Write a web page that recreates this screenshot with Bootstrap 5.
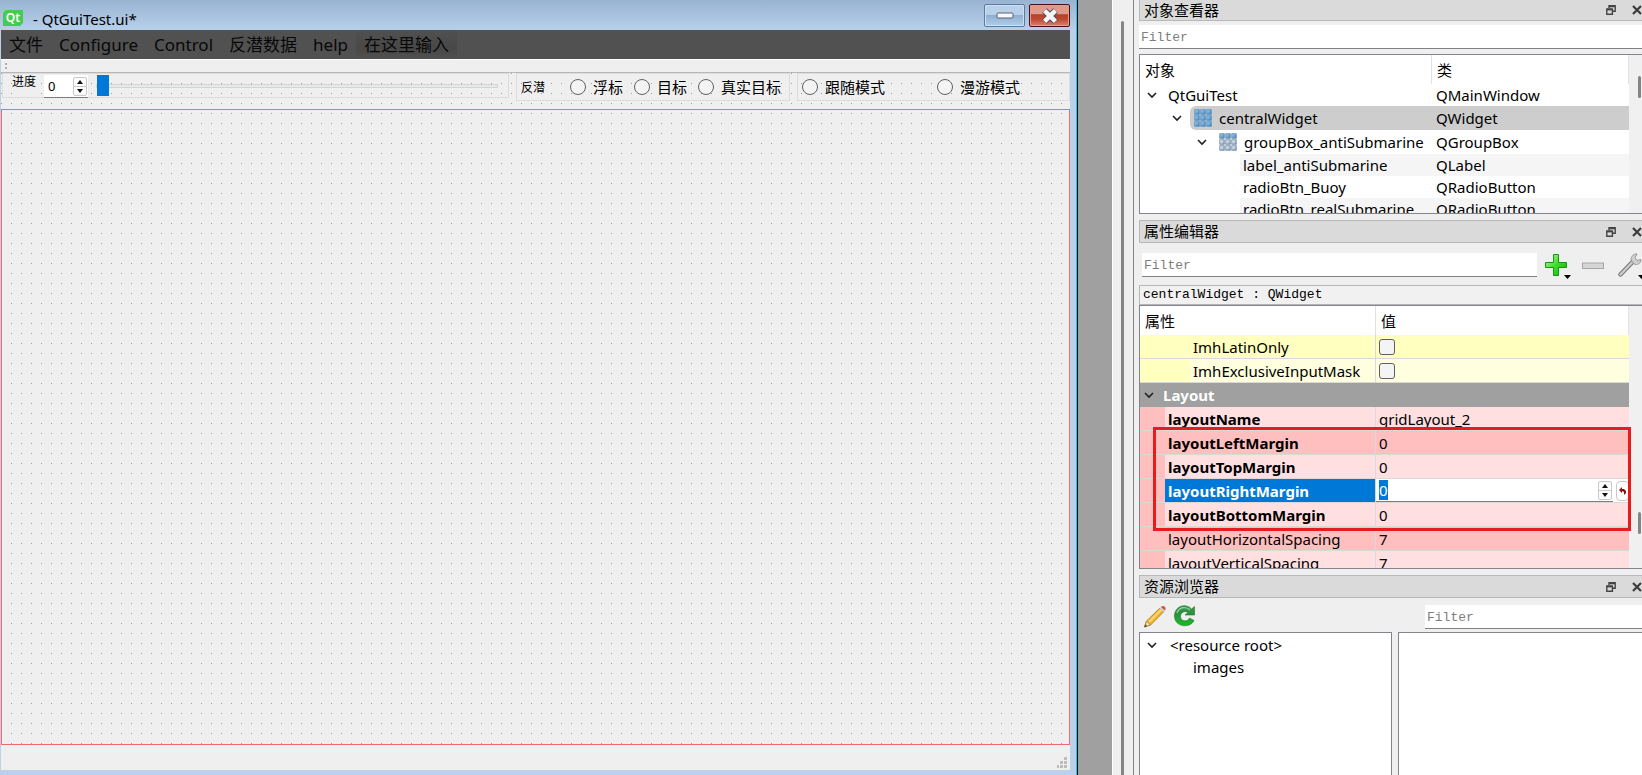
<!DOCTYPE html>
<html lang="zh-CN">
<head>
<meta charset="utf-8">
<meta name="viewport" content="width=device-width, initial-scale=1">
<title>QtGuiTest.ui - Qt Designer</title>
<link href="https://cdn.jsdelivr.net/npm/bootstrap@5.3.0/dist/css/bootstrap.min.css" rel="stylesheet">
<style>
  :root { --face: #efefef; --line: #82868c; --blue: #0078d7; }
  body { font-family: "Noto Sans", "Noto Sans CJK SC", sans-serif; font-size: 15px; line-height: 20px; color: #000; background: var(--face); }
  button { padding: 0; border: 0; background: none; display: flex; align-items: center; justify-content: center; }
  svg { display: block; flex: none; }

  /* form window */
  .form-win { background: #b9d1ea; padding: 0 7px 5px 1px; border-right: 1px solid #000; box-shadow: inset -1px 0 #27c4e8; min-width: 0; }
  .win-title { height: 30px; margin: 0 -6px 0 -1px; padding: 4px 6px 0 3px; background: linear-gradient(#99b3d2, #b7d0ea); }
  .win-title h1 { font-size: 15px; line-height: 30px; margin: 0 0 0 10px; font-weight: 400; }
  .qt-logo { margin-top: 6px; }
  .win-btn { width: 41px; height: 23px; border: 1px solid #5a7aa0; border-radius: 2px; box-shadow: inset 0 0 0 1px #cfe0f3; background: linear-gradient(#b9d0ea 45%, #8fafd1 50%, #b3cde9); }
  .win-btn.x-btn { border-color: #4b1016; box-shadow: inset 0 0 0 1px #e39c8f; background: linear-gradient(#e09a8c 42%, #b8402c 46%, #c04a33 70%, #d98674); }
  .menu-strip { background: #515151; height: 29px; font-size: 17px; line-height: 29px; }
  .menu-strip a { color: #080808; text-decoration: none; padding: 0 8px; }
  .menu-strip .type-here { background: linear-gradient(#505050, #484848 65%, #515151); }
  .tool-strip { height: 14px; border-top: 1px solid #fff; border-bottom: 1px solid #b8b8b8; background: var(--face); padding: 3px 0 0 4px; }
  .grip { width: 2px; height: 6px; border: solid #b0b0b0; border-width: 2px 0; }
  .canvas-area { background: conic-gradient(from 270deg at 1px 1px, #9c9c9c 25%, transparent 0) 0 0 / 10px 10px var(--face); }
  .group-row { height: 36px; gap: 7px; padding-left: 1px; }
  .group-frame { border: 1px solid #dcdcdc; height: 28px; font-size: 15px; line-height: 26px; }
  .group-frame.progress-frame { height: 25px; font-size: 12px; line-height: 14px; padding: 1px 10px 0 9px; }
  .group-frame.anti { width: 274px; padding-left: 4px; }
  .group-frame.mode { width: 273px; padding-left: 4px; }
  .anti .cap { font-size: 12px; width: 49px; line-height: 28px; flex: none; }
  .opt { gap: 7px; height: 26px; flex: none; white-space: nowrap; }
  .opt input, .pick { appearance: none; margin: 0; border: 1px solid #606060; background: #f4f4f4; flex: none; }
  .opt input { width: 16px; height: 16px; border-radius: 50%; }
  .anti .opt { width: 64px; }
  .mode .opt { width: 135px; }
  .patch { background: var(--face); line-height: 20px; }
  .progress-frame .patch { line-height: 14px; }
  .spin { background: #fff; border-bottom: 1px solid #7d7d7d; height: 23px; }
  .spin input { border: 0; padding: 0; background: transparent; outline: 0; min-width: 0; }
  .spin.small-spin { width: 44px; margin-left: 8px; font-size: 13px; }
  .steps { width: 14px; background: #fdfdfd; border: 1px solid #c9c9c9; border-radius: 2px; margin: 2px 1px 1px 0; flex: none; }
  .steps button { flex: 1; }
  .steps button + button { border-top: 1px solid #c9c9c9; }
  .track { appearance: none; background: transparent; height: 21px; margin: 0 0 0 8px; min-width: 0; }
  .track::-webkit-slider-runnable-track { height: 4px; background: #e6e9e9; border: 1px solid #d4d6d6; }
  .track::-webkit-slider-thumb { appearance: none; width: 12px; height: 21px; background: var(--blue); margin-top: -10px; }
  .central { border: 1px solid #f26a6a; }
  .status-strip { height: 25px; background: var(--face); padding: 12px 3px 0 0; }

  /* area between the form window and the docks */
  .mdi { width: 35px; background: #a0a0a0; border-right: 1px solid #fff; }
  .mdi-scroll { width: 21px; padding: 21px 9px 0 8px; border-right: 1px solid var(--line); }
  .mdi-scroll div { background: #858585; border-radius: 2px 2px 0 0; }

  /* docks */
  .docks { width: 508px; padding-left: 5px; }
  .dock-title { background: #dadada; border: 1px solid #b7b7b7; border-right: 0; height: 23px; padding-left: 4px; }
  .dock-title h2 { font-size: 15px; line-height: 20px; margin: 0; font-weight: 400; }
  .dock-title.first { height: 21px; border-top: 0; }
  .dock-title button { width: 10px; height: 21px; }
  .dock-title.first button { height: 19px; }
  .find { font: 13px/20px "Liberation Mono", monospace; border: 0; border-bottom: 1px solid #808080; background: #fff; padding: 1px 2px 0; height: 24px; outline: 0; border-radius: 0; min-width: 0; }
  .find::placeholder { color: #7d7d7d; opacity: 1; }
  .pane { border: 1px solid var(--line); border-right: 0; background: #fff; overflow: hidden; }
  .gutter { width: 13px; background: #f0f0f0; flex: none; }
  .gutter div { width: 3px; height: 22px; background: #858585; border-radius: 2px; margin-left: 9px; }
  .grid-tab { table-layout: fixed; border-collapse: separate; border-spacing: 0; flex: 1; align-self: flex-start; width: 100%; white-space: nowrap; }
  .grid-tab th { font-weight: 400; height: 29px; padding: 0 5px; border-right: 1px solid #e2e2e2; }
  .grid-tab td { padding: 0; }
  .tree td { height: 22px; }
  .tree .tall td { height: 24px; }
  .tree td + td { padding-left: 4px; }
  .lvl { height: 100%; }
  .lvl .hit { line-height: 22px; }
  .twist { width: 10px; }
  .sel td + td, .sel .hit { background: #cdcdcd; }
  .alt td + td, .alt .hit { background: #f5f5f5; }
  .object-label { font: 13px/18px "Liberation Mono", monospace; border: 1px solid #b7b7b7; border-right: 0; height: 20px; padding-left: 3px; background: #f1f1f1; }
  .props td { height: 24px; border-bottom: 1px solid #d9d9d9; }
  .props td + td { padding-left: 3px; }
  .props td:first-child { border-right: 1px solid #d9d9d9; }
  .props .name { height: 23px; line-height: 24px; padding-left: 3px; margin-left: 25px; }
  .props .deep { margin-left: 50px; }
  .y1 td, .y2 td:first-child { background: #ffffbf; }
  .y2 td + td, .y2 .name { background: #ffffdf; }
  .r1 td, .r2 td:first-child { background: #ffbfbf; }
  .r2 td + td, .r2 .name { background: #ffdfdf; }
  .props .section td { background: #a0a0a0; color: #fff; font-weight: 700; border-color: #a0a0a0; }
  .props .current .name { background: var(--blue); color: #fff; }
  .props .current td + td { background: #fff; padding-left: 0; }
  .pick { width: 16px; height: 16px; border-radius: 3px; display: block; }
  .value-input { width: 100%; font-size: 15px; }
  .value-input::selection { background: var(--blue); color: #fff; }
  .reset { width: 13px; height: 20px; border: 1px solid #c9c9c9; border-radius: 4px; background: #fff; }
  .callout-frame { position: absolute; left: 13px; top: 121px; right: 11px; height: 104px; border: 3px solid #e81c1c; pointer-events: none; }
</style>
</head>
<body class="vh-100 overflow-hidden">
<svg width="0" height="0" class="position-absolute" aria-hidden="true">
  <defs>
    <symbol id="chev" viewBox="0 0 10 10"><path d="M1 3l4 4 4-4" fill="none" stroke="#222" stroke-width="1.6"/></symbol>
    <symbol id="float" viewBox="0 0 10 10"><path d="M3 3V.8h6.2v5.4H7" fill="none" stroke="#444" stroke-width="1.4"/><path d="M3 1.3h6" stroke="#444" stroke-width="2"/><path d="M.8 4.2h5.6v5H.8z" fill="none" stroke="#444" stroke-width="1.4"/><path d="M.5 4.4h6" stroke="#444" stroke-width="2"/></symbol>
    <symbol id="cross" viewBox="0 0 10 10"><path d="M1 1l8 8M9 1L1 9" stroke="#3c3c3c" stroke-width="2.2"/></symbol>
    <symbol id="up" viewBox="0 0 6 4"><path d="M3 0l3 4H0z" fill="#111"/></symbol>
    <symbol id="down" viewBox="0 0 6 4"><path d="M3 4l3-4H0z" fill="#111"/></symbol>
    <linearGradient id="cellBlue" x2="1" y2="1"><stop stop-color="#a9d4f5"/><stop offset="1" stop-color="#3a86c4"/></linearGradient>
    <linearGradient id="cellPale" x2="1" y2="1"><stop stop-color="#fff"/><stop offset="1" stop-color="#8aa0b4"/></linearGradient>
    <symbol id="gridBlue" viewBox="0 0 18 18"><rect width="18" height="18" rx="1" fill="#a3bfd8"/><g fill="url(#cellBlue)" stroke="#4a7cab" stroke-width=".6"><path d="M.8.8h4.400v4.400H.8z"/><path d="M6.800.8h4.400v4.400H6.800z"/><path d="M12.800.8h4.400v4.400h-4.400z"/><path d="M.8 6.800h4.400v4.400H.8z"/><path d="M6.800 6.800h4.400v4.400H6.800z"/><path d="M12.800 6.800h4.400v4.400h-4.400z"/><path d="M.8 12.800h4.400v4.400H.8z"/><path d="M6.800 12.800h4.400v4.400H6.800z"/><path d="M12.800 12.800h4.400v4.400h-4.400z"/></g></symbol>
    <symbol id="gridPale" viewBox="0 0 18 18"><rect width="18" height="18" rx="1" fill="#d8e0e8"/><g stroke="#5f7f9d" stroke-width=".7"><g fill="url(#cellBlue)"><path d="M.8.8h4.400v4.400H.8z"/><path d="M6.800.8h4.400v4.400H6.800z"/><path d="M12.800.8h4.400v4.400h-4.400z"/></g><g fill="url(#cellPale)"><path d="M.8 6.800h4.400v4.400H.8z"/><path d="M6.800 6.800h4.400v4.400H6.800z"/><path d="M12.800 6.800h4.400v4.400h-4.400z"/><path d="M.8 12.800h4.400v4.400H.8z"/><path d="M6.800 12.800h4.400v4.400H6.800z"/><path d="M12.800 12.800h4.400v4.400h-4.400z"/></g></g></symbol>
  </defs>
</svg>

<div class="d-flex h-100">
  <main class="form-win d-flex flex-column flex-grow-1">
    <header class="win-title d-flex align-items-start">
      <svg class="qt-logo" width="20" height="16" viewBox="0 0 20 16" role="img" aria-label="Qt"><path d="M3 0h17v13l-3 3H0V3z" fill="#41cd52"/><text x="10" y="12" text-anchor="middle" font-family="Noto Sans" font-size="12" font-weight="600" fill="#fff">Qt</text></svg>
      <h1>- QtGuiTest.ui*</h1>
      <div class="d-flex ms-auto gap-1">
        <button class="win-btn" type="button" aria-label="最小化"><svg width="18" height="8" viewBox="0 0 18 8"><rect x="1" y="1" width="16" height="5" rx="1" fill="#f8f8f8" stroke="#54607a"/></svg></button>
        <button class="win-btn x-btn" type="button" aria-label="关闭"><svg width="18" height="16" viewBox="0 0 18 16"><path d="M3.500 2.500l11 11M14.500 2.500l-11 11" stroke="#4a4b60" stroke-width="6.500"/><path d="M3.600 2.600l10.800 10.800M14.400 2.600L3.600 13.400" stroke="#f4f4f4" stroke-width="4.500"/></svg></button>
      </div>
    </header>
    <nav class="menu-strip d-flex">
      <a href="#">文件</a><a href="#">Configure</a><a href="#">Control</a><a href="#">反潜数据</a><a href="#">help</a><a href="#" class="type-here">在这里输入</a>
    </nav>
    <div class="tool-strip"><div class="grip"></div></div>
    <section class="canvas-area d-flex flex-column flex-grow-1">
      <div class="group-row d-flex">
        <div class="group-frame progress-frame d-flex flex-grow-1">
          <label for="step" class="patch h-100">进度</label>
          <div class="spin small-spin d-flex flex-shrink-0">
            <input id="step" class="w-100 ps-1" type="text" value="0">
            <div class="steps d-flex flex-column"><button type="button" aria-label="增加"><svg width="6" height="4"><use href="#up"/></svg></button><button type="button" aria-label="减少"><svg width="6" height="4"><use href="#down"/></svg></button></div>
          </div>
          <input class="track flex-grow-1" type="range" min="0" max="100" value="0" aria-label="进度">
        </div>
        <div class="group-frame anti d-flex flex-shrink-0">
          <span class="cap">反潜</span>
          <div class="opt d-flex align-items-center"><input type="radio" name="anti" id="buoy"><label class="patch" for="buoy">浮标</label></div>
          <div class="opt d-flex align-items-center"><input type="radio" name="anti" id="target"><label class="patch" for="target">目标</label></div>
          <div class="opt d-flex align-items-center"><input type="radio" name="anti" id="real"><label class="patch" for="real">真实目标</label></div>
        </div>
        <div class="group-frame mode d-flex flex-shrink-0">
          <div class="opt d-flex align-items-center"><input type="radio" name="mode" id="follow"><label class="patch" for="follow">跟随模式</label></div>
          <div class="opt d-flex align-items-center"><input type="radio" name="mode" id="roam"><label class="patch" for="roam">漫游模式</label></div>
        </div>
      </div>
      <div class="central flex-grow-1"></div>
    </section>
    <footer class="status-strip d-flex justify-content-end">
      <svg width="10" height="11" viewBox="0 0 10 11" fill="#bdbdbd"><path d="M7 0h3v3H7zM3 4h3v3H3zM7 4h3v3H7zM0 8h2v3H0zM3 8h3v3H3zM7 8h3v3H7z"/></svg>
    </footer>
  </main>
  <div class="mdi flex-shrink-0"></div>
  <div class="mdi-scroll flex-shrink-0"><div class="h-100"></div></div>

  <aside class="docks d-flex flex-column flex-shrink-0">
    <section>
      <div class="dock-title first d-flex"><h2>对象查看器</h2>
        <button class="ms-auto" type="button" aria-label="浮动"><svg width="10" height="10"><use href="#float"/></svg></button><button class="ms-3" type="button" aria-label="关闭"><svg width="10" height="10"><use href="#cross"/></svg></button></div>
      <input class="find w-100 d-block mt-1" id="f1" type="text" placeholder="Filter" aria-label="Filter objects">
      <div class="pane d-flex" style="height:160px;margin-top:5px">
        <table class="grid-tab tree">
          <colgroup><col><col style="width:197px"></colgroup>
          <thead><tr><th>对象</th><th>类</th></tr></thead>
          <tbody>
            <tr><td><div class="d-flex align-items-center" style="padding-left:7px"><svg class="twist" height="10"><use href="#chev"/></svg><span style="margin-left:11px">QtGuiTest</span></div></td><td>QMainWindow</td></tr>
            <tr class="tall sel"><td><div class="lvl d-flex align-items-center" style="padding-left:32px"><svg class="twist" height="10"><use href="#chev"/></svg><div class="hit d-flex align-items-center flex-grow-1 h-100 rounded-start ms-2 ps-1"><svg width="18" height="18"><use href="#gridBlue"/></svg><span style="margin-left:7px">centralWidget</span></div></div></td><td>QWidget</td></tr>
            <tr class="tall"><td><div class="lvl d-flex align-items-center" style="padding-left:57px"><svg class="twist" height="10"><use href="#chev"/></svg><div class="d-flex align-items-center ms-2 ps-1"><svg width="18" height="18"><use href="#gridPale"/></svg><span style="margin-left:7px">groupBox_antiSubmarine</span></div></div></td><td>QGroupBox</td></tr>
            <tr class="alt"><td><div class="lvl" style="padding-left:100px"><div class="hit" style="padding-left:3px">label_antiSubmarine</div></div></td><td>QLabel</td></tr>
            <tr><td><div class="lvl" style="padding-left:100px"><div class="hit" style="padding-left:3px">radioBtn_Buoy</div></div></td><td>QRadioButton</td></tr>
            <tr class="alt"><td><div class="lvl" style="padding-left:100px"><div class="hit" style="padding-left:3px">radioBtn_realSubmarine</div></div></td><td>QRadioButton</td></tr>
          </tbody>
        </table>
        <div class="gutter"><div style="margin-top:21px"></div></div>
      </div>
    </section>

    <section style="margin-top:6px">
      <div class="dock-title d-flex"><h2>属性编辑器</h2>
        <button class="ms-auto" type="button" aria-label="浮动"><svg width="10" height="10"><use href="#float"/></svg></button><button class="ms-3" type="button" aria-label="关闭"><svg width="10" height="10"><use href="#cross"/></svg></button></div>
      <div class="d-flex overflow-hidden" style="padding:10px 0 6px 3px">
        <input class="find flex-grow-1" id="f2" type="text" placeholder="Filter" aria-label="Filter properties">
        <button class="ms-2 flex-shrink-0" type="button" aria-label="添加"><svg width="27" height="26" viewBox="0 0 27 26"><defs><linearGradient id="gp" x2="1" y2="1"><stop stop-color="#b9ff9a"/><stop offset=".5" stop-color="#3fdc2c"/><stop offset="1" stop-color="#08b400"/></linearGradient></defs><path d="M8.500 1.500h5v8h8v5h-8v8h-5v-8h-8v-5h8z" fill="url(#gp)" stroke="#129a10"/><path d="M19 22h7l-3.500 4z"/></svg></button>
        <button class="flex-shrink-0" style="margin-left:10px" type="button" aria-label="移除"><svg width="22" height="8" viewBox="0 0 22 8"><rect x=".5" y="1" width="21" height="5.500" fill="#d6d6d6" stroke="#a5a5a5"/></svg></button>
        <button class="flex-shrink-0" style="margin-left:14px" type="button" aria-label="配置"><svg width="24" height="26" viewBox="0 0 24 26"><path d="M2.500 21.500L15 8.500" stroke="#777" stroke-width="4.500" stroke-linecap="round"/><path d="M2.500 21.500L15 8.500" stroke="#ccc" stroke-width="2.500" stroke-linecap="round"/><path d="M13 7c0-4 3-6.500 6-6l-2 3.500 2 3 4-1c0 4-4 6-7 4.500z" fill="#d0d0d0" stroke="#888" stroke-width=".8"/><path d="M20 22h7l-3.500 4z"/></svg></button>
      </div>
      <div class="object-label">centralWidget : QWidget</div>
      <div class="pane d-flex position-relative" style="height:264px">
        <table class="grid-tab props">
          <colgroup><col><col style="width:253px"></colgroup>
          <thead><tr><th>属性</th><th>值</th></tr></thead>
          <tbody>
            <tr class="y1"><td><label for="latin" class="name deep d-block">ImhLatinOnly</label></td><td><input class="pick" type="checkbox" id="latin"></td></tr>
            <tr class="y2"><td><label for="mask" class="name deep d-block">ImhExclusiveInputMask</label></td><td><input class="pick" type="checkbox" id="mask"></td></tr>
            <tr class="section"><td colspan="2"><div class="d-flex align-items-center ps-1"><svg class="twist" height="10"><use href="#chev"/></svg><span style="margin-left:9px">Layout</span></div></td></tr>
            <tr class="r2"><td><div class="name fw-bold">layoutName</div></td><td>gridLayout_2</td></tr>
            <tr class="r1"><td><div class="name fw-bold">layoutLeftMargin</div></td><td>0</td></tr>
            <tr class="r2"><td><div class="name fw-bold">layoutTopMargin</div></td><td>0</td></tr>
            <tr class="r1 current"><td><label for="rightm" class="name fw-bold d-block">layoutRightMargin</label></td><td><div class="d-flex align-items-center"><div class="spin d-flex flex-grow-1"><input class="value-input" style="padding-left:3px" id="rightm" type="text" value="0"><div class="steps d-flex flex-column"><button type="button" aria-label="增加"><svg width="6" height="4"><use href="#up"/></svg></button><button type="button" aria-label="减少"><svg width="6" height="4"><use href="#down"/></svg></button></div></div><button class="reset" style="margin-left:3px" type="button" aria-label="重置"><svg width="7" height="8" viewBox="0 0 7 8"><path d="M0 3l3-3v2h2l2 2v2L5 8V5L3 4v2z" fill="#8b1010"/></svg></button></div></td></tr>
            <tr class="r2"><td><div class="name fw-bold">layoutBottomMargin</div></td><td>0</td></tr>
            <tr class="r1"><td><div class="name">layoutHorizontalSpacing</div></td><td>7</td></tr>
            <tr class="r2"><td><div class="name">layoutVerticalSpacing</div></td><td>7</td></tr>
          </tbody>
        </table>
        <div class="gutter"><div style="margin-top:206px"></div></div>
        <div class="callout-frame"></div>
      </div>
    </section>

    <section class="d-flex flex-column flex-grow-1" style="margin-top:6px">
      <div class="dock-title d-flex"><h2>资源浏览器</h2>
        <button class="ms-auto" type="button" aria-label="浮动"><svg width="10" height="10"><use href="#float"/></svg></button><button class="ms-3" type="button" aria-label="关闭"><svg width="10" height="10"><use href="#cross"/></svg></button></div>
      <div class="d-flex align-items-start" style="padding:7px 0 3px 5px;gap:8px">
        <button type="button" aria-label="编辑资源"><svg width="22" height="23" viewBox="0 0 22 23"><path d="M.5 22l2-6L16 3l4 3.500L6.500 20z" fill="#f4b62e" stroke="#a8731a" stroke-width=".8"/><path d="M5 17L17.500 4.500" stroke="#ffe08a" stroke-width="1.500"/><path d="M.5 22l2-6 4 4z" fill="#f1d9a8" stroke="#8a6a3a" stroke-width=".6"/><path d="M.5 22l1-2.500 1.500 1.500z" fill="#333"/><path d="M15.500 3.500L17 2l4 3.500L19.500 7z" fill="#c8ccd0"/><path d="M17 2c2-2.500 6 0 4 3.500z" fill="#c9583a"/></svg></button>
        <button type="button" aria-label="刷新"><svg width="21" height="22" viewBox="0 0 21 22"><defs><linearGradient id="gr" x2="0" y2="1"><stop stop-color="#3c9152"/><stop offset=".45" stop-color="#2f8f3e"/><stop offset="1" stop-color="#14c01c"/></linearGradient></defs><path d="M20.500 1.500v8.500H11l3-2.500c-3-2-7.500-.5-7.500 4 0 5 7 6 9 1.500l4.500 2.500C16.500 23.500.5 22.500.5 11 .5 1 11.500-2.500 17.500 4z" fill="url(#gr)" stroke="#1d7a2a" stroke-width=".6"/><path d="M3 8c2-6 9-7 13-3" fill="none" stroke="#8ed49a" stroke-width="1.300"/></svg></button>
        <input class="find ms-auto" id="f3" style="width:217px" type="text" placeholder="Filter" aria-label="Filter resources">
      </div>
      <div class="d-flex flex-grow-1" style="gap:6px">
        <div class="pane border-bottom-0 flex-shrink-0" style="width:253px;border-right:1px solid #82868c">
          <ul class="list-unstyled m-0" style="padding-top:2px">
            <li><div class="d-flex align-items-center" style="padding-left:7px;height:20px"><svg class="twist" height="10"><use href="#chev"/></svg><span style="margin-left:13px">&lt;resource root&gt;</span></div>
              <ul class="list-unstyled" style="padding:2px 0 0 53px"><li>images</li></ul></li>
          </ul>
        </div>
        <div class="pane border-bottom-0 flex-grow-1"></div>
      </div>
    </section>
  </aside>
</div>
<script src="https://cdn.jsdelivr.net/npm/bootstrap@5.3.0/dist/js/bootstrap.bundle.min.js"></script>
<script>
  const field = document.getElementById('rightm');
  field.focus();
  field.select();
</script>
</body>
</html>
